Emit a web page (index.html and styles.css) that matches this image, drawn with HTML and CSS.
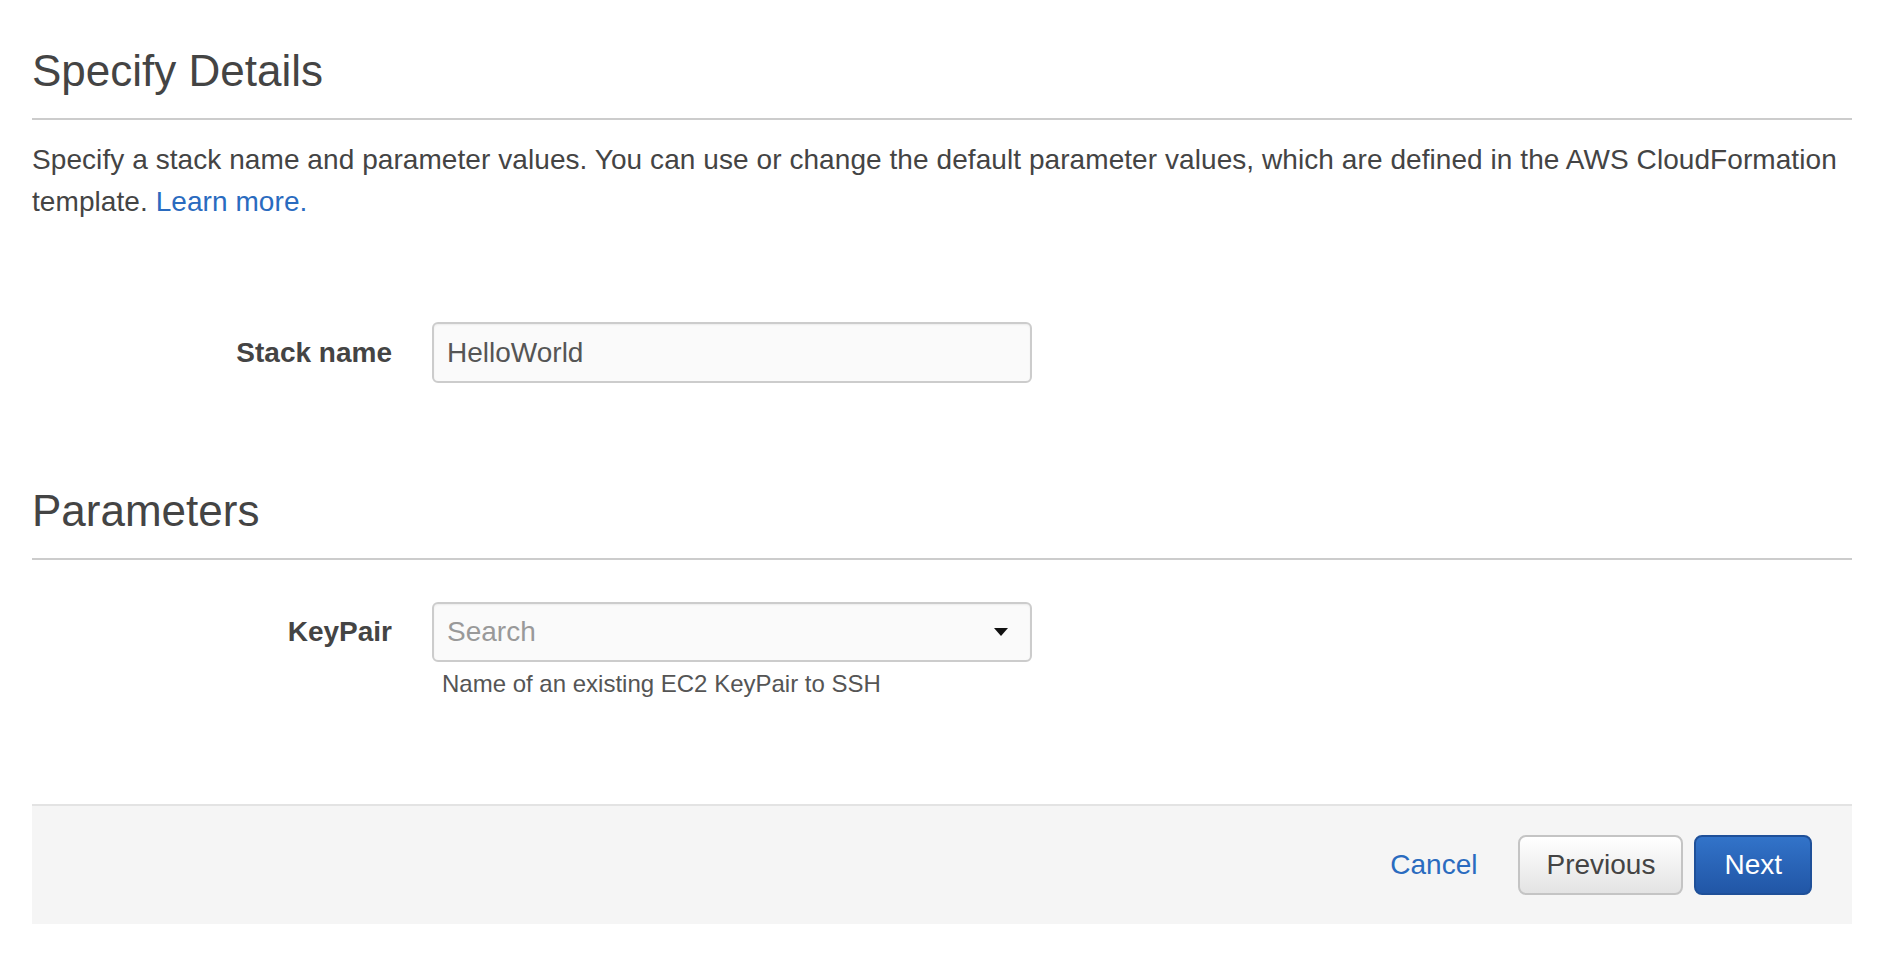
FILE: index.html
```html
<!DOCTYPE html>
<html lang="en">
<head>
<meta charset="utf-8">
<title>Specify Details</title>
<link rel="stylesheet" href="styles.css">
</head>
<body>
<main class="page">
  <section class="section">
    <h2 class="section-title">Specify Details</h2>
    <p class="intro">Specify a stack name and parameter values. You can use or change the default parameter values, which are defined in the AWS CloudFormation template. <a href="#" class="link">Learn more.</a></p>
    <div class="form-row stack-row">
      <label class="field-label" for="stack-name">Stack name</label>
      <input id="stack-name" class="text-input" type="text" value="HelloWorld">
    </div>
  </section>

  <section class="section params">
    <h2 class="section-title">Parameters</h2>
    <div class="form-row keypair-row">
      <label class="field-label">KeyPair</label>
      <div class="select-box">
        <span class="placeholder">Search</span>
        <span class="caret"></span>
      </div>
      <div class="help">Name of an existing EC2 KeyPair to SSH</div>
    </div>
  </section>

  <footer class="footer">
    <a href="#" class="cancel">Cancel</a>
    <button class="btn btn-secondary" type="button">Previous</button>
    <button class="btn btn-primary" type="button">Next</button>
  </footer>
</main>
</body>
</html>
```

FILE: styles.css
```css
* {
  box-sizing: border-box;
}

html,
body {
  margin: 0;
  background: #ffffff;
}

body {
  font-family: "Liberation Sans", Arial, Helvetica, sans-serif;
  color: #444444;
}

.page {
  padding: 45px 36px 0 32px;
}

.section-title {
  margin: 0;
  font-size: 44px;
  line-height: 52px;
  font-weight: normal;
  color: #444444;
  padding-bottom: 21px;
  border-bottom: 2px solid #cccccc;
}

.intro {
  margin: 19px 0 0;
  font-size: 28px;
  line-height: 42px;
  letter-spacing: 0.07px;
  color: #444444;
}

.link {
  color: #2a6bbf;
  text-decoration: none;
}

.form-row {
  display: grid;
  grid-template-columns: 360px 600px;
  column-gap: 40px;
  align-items: center;
}

.stack-row {
  margin-top: 99px;
}

.field-label {
  text-align: right;
  font-weight: bold;
  font-size: 28px;
  line-height: 34px;
  color: #444444;
}

.text-input {
  display: block;
  width: 100%;
  height: 61px;
  margin: 0;
  border: 2px solid #cccccc;
  border-radius: 6px;
  background: #fafafa;
  box-shadow: inset 0 1px 2px rgba(0, 0, 0, 0.06);
  padding: 0 13px;
  font-family: "Liberation Sans", Arial, Helvetica, sans-serif;
  font-size: 28px;
  color: #555555;
  outline: none;
}

.params {
  margin-top: 102px;
}

.keypair-row {
  margin-top: 42px;
}

.select-box {
  height: 60px;
  border: 2px solid #cccccc;
  border-radius: 6px;
  background: #fafafa;
  box-shadow: inset 0 1px 2px rgba(0, 0, 0, 0.06);
  padding: 0 22px 0 13px;
  display: flex;
  align-items: center;
  justify-content: space-between;
}

.placeholder {
  font-size: 28px;
  color: #999999;
}

.caret {
  width: 0;
  height: 0;
  border-left: 7px solid transparent;
  border-right: 7px solid transparent;
  border-top: 8px solid #111111;
}

.help {
  grid-column: 2;
  margin-top: 7px;
  padding-left: 10px;
  font-size: 24px;
  line-height: 30px;
  color: #555555;
}

.footer {
  margin-top: 105px;
  height: 120px;
  border-top: 2px solid #e3e3e3;
  background: #f5f5f5;
  display: flex;
  justify-content: flex-end;
  align-items: center;
  padding-right: 40px;
}

.cancel {
  font-size: 28px;
  color: #2a6bbf;
  text-decoration: none;
  margin-right: 41px;
}

.btn {
  height: 60px;
  padding: 0 26px;
  border-radius: 8px;
  border: 2px solid;
  font-family: "Liberation Sans", Arial, Helvetica, sans-serif;
  font-size: 28px;
  cursor: pointer;
}

.btn-secondary {
  color: #444444;
  border-color: #c4c4c4;
  background: linear-gradient(#ffffff, #e3e3e3);
}

.btn-primary {
  margin-left: 11px;
  padding: 0 28px;
  color: #ffffff;
  border-color: #1f5099;
  background: linear-gradient(#3273c9, #2156a6);
}
```
